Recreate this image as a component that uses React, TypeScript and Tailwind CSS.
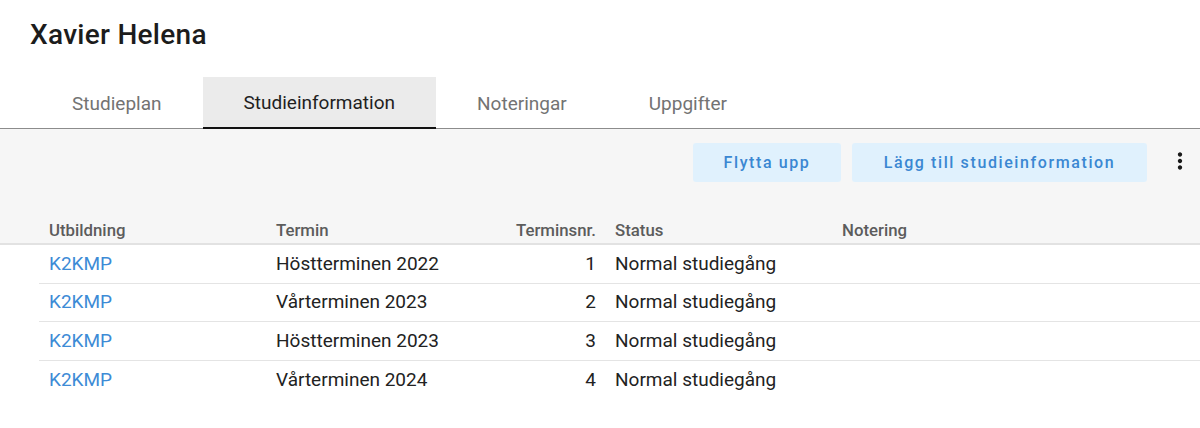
import * as React from 'react';

const TABS = ['Studieplan', 'Studieinformation', 'Noteringar', 'Uppgifter'];

const ROWS = [
  { program: 'K2KMP', term: 'Höstterminen 2022', nr: 1, status: 'Normal studiegång' },
  { program: 'K2KMP', term: 'Vårterminen 2023', nr: 2, status: 'Normal studiegång' },
  { program: 'K2KMP', term: 'Höstterminen 2023', nr: 3, status: 'Normal studiegång' },
  { program: 'K2KMP', term: 'Vårterminen 2024', nr: 4, status: 'Normal studiegång' },
];

function MoreVertIcon() {
  return (
    <svg width="26" height="26" viewBox="0 0 24 24" fill="#1a1a1a" aria-hidden="true">
      <path d="M12 8c1.1 0 2-.9 2-2s-.9-2-2-2-2 .9-2 2 .9 2 2 2zm0 2c-1.1 0-2 .9-2 2s.9 2 2 2 2-.9 2-2-.9-2-2-2zm0 6c-1.1 0-2 .9-2 2s.9 2 2 2 2-.9 2-2-.9-2-2-2z" />
    </svg>
  );
}

export default function App() {
  const [activeTab, setActiveTab] = React.useState('Studieinformation');

  return (
    <div className="w-[1200px] h-[428px] bg-white overflow-hidden font-['Roboto',sans-serif]">
      <h1 className="pl-[30px] pt-[17px] text-[28px] leading-[36px] font-medium tracking-[0.01em] text-[#1c1c1c]">
        Xavier Helena
      </h1>

      {/* Tabs */}
      <div className="mt-[24px] flex h-[52px] pl-[31px] border-b border-[#8c8c8c]">
        {TABS.map(tab => {
          const active = tab === activeTab;
          return (
            <button
              key={tab}
              onClick={() => setActiveTab(tab)}
              className={
                active
                  ? 'h-[52px] px-[41px] flex items-center text-[19px] text-[#1f1f1f] bg-[#ebebeb] border-b-2 border-[#111] pt-[3px]'
                  : 'h-[51px] px-[41px] flex items-center text-[19px] text-[#737373] pt-[3px]'
              }
            >
              {tab}
            </button>
          );
        })}
      </div>

      {/* Toolbar + table header */}
      <div className="bg-[#f6f6f6] pt-[14px]">
        <div className="flex items-center justify-end h-[39px] pr-[7px]">
          <button className="w-[148px] h-[39px] rounded-[3px] bg-[#e0f1fd] text-[#3a87d2] text-[16px] font-medium tracking-[0.1em]">
            Flytta upp
          </button>
          <button className="ml-[11px] w-[295px] h-[39px] rounded-[3px] bg-[#e0f1fd] text-[#3a87d2] text-[16px] font-medium tracking-[0.1em]">
            Lägg till studieinformation
          </button>
          <button className="ml-[20px] w-[26px] h-[26px] -mt-[4px] flex items-center justify-center">
            <MoreVertIcon />
          </button>
        </div>

        <div className="mt-[38px] flex pl-[39px] pb-[3px] border-b-2 border-[#e2e2e2] text-[16.8px] leading-[20px] font-medium text-[#5c5c5c]">
          <div className="w-[227px] pl-[10px]">Utbildning</div>
          <div className="w-[227px] pl-[10px]">Termin</div>
          <div className="w-[112px] pr-[9px] text-right">Terminsnr.</div>
          <div className="w-[227px] pl-[10px]">Status</div>
          <div className="flex-1 pl-[10px]">Notering</div>
        </div>
      </div>

      {/* Rows */}
      <div className="ml-[39px]">
        {ROWS.map((row, i) => (
          <div
            key={row.term}
            className={
              i < ROWS.length - 1
                ? 'flex items-center h-[38.5px] border-b border-[#e4e4e4] text-[19px] text-[#222]'
                : 'flex items-center h-[38.5px] text-[19px] text-[#222]'
            }
          >
            <div className="w-[227px] pl-[10px]">
              <a href="#" className="text-[#3d8bd6]">{row.program}</a>
            </div>
            <div className="w-[227px] pl-[10px]">{row.term}</div>
            <div className="w-[112px] pr-[9px] text-right">{row.nr}</div>
            <div className="w-[227px] pl-[10px]">{row.status}</div>
            <div className="flex-1 pl-[10px]"></div>
          </div>
        ))}
      </div>
    </div>
  );
}
